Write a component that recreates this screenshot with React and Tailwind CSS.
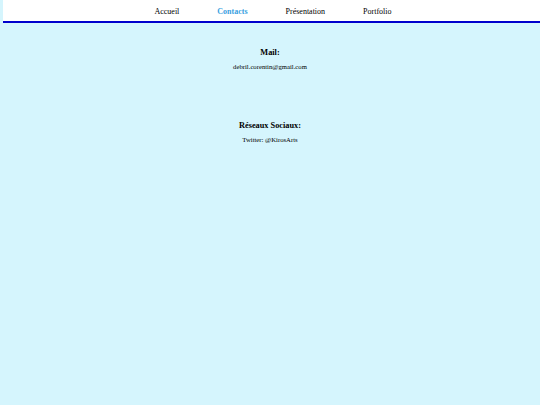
export default function App() {
  const serif = { fontFamily: '"Liberation Serif", "Times New Roman", serif' };
  return (
    <div className="min-h-[405px] w-full bg-[#d5f5fd]" style={serif}>
      <nav className="ml-[3px] flex h-[23px] items-start justify-center gap-[38px] border-b-[2px] border-[#0000cc] bg-white pl-[3px] pt-[5px] text-[8px] text-black">
        <a className="leading-[13px]">Accueil</a>
        <a className="font-bold leading-[13px] text-[#3a9fdf]">Contacts</a>
        <a className="leading-[13px]">Présentation</a>
        <a className="leading-[13px]">Portfolio</a>
      </nav>
      <div className="flex flex-col items-center text-black">
        <h3 className="mt-[24px] text-[8.3px] font-bold leading-[11px]">Mail:</h3>
        <p className="mt-[4px] text-[6.7px] leading-[9px]">debril.corentin@gmail.com</p>
        <h3 className="mt-[49px] text-[8.3px] font-bold leading-[11px]">Réseaux Sociaux:</h3>
        <p className="mt-[4px] text-[6.7px] leading-[9px]">Twitter: @KirosArts</p>
      </div>
    </div>
  );
}
